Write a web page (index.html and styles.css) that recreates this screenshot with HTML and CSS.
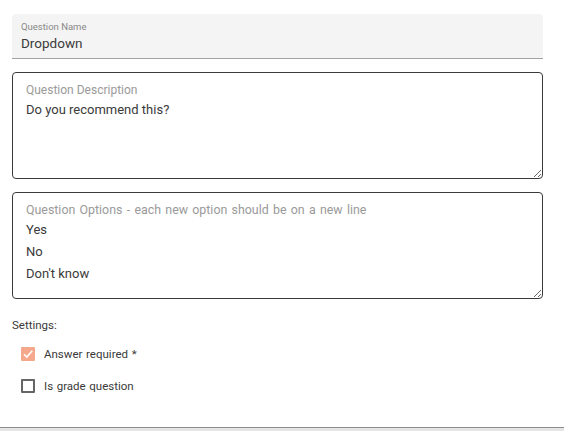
FILE: index.html
```html
<!DOCTYPE html>
<html>
<head>
<meta charset="utf-8">
<link rel="stylesheet" href="styles.css">
</head>
<body>
<div class="page">
  <div class="form">
    <div class="name-field">
      <div class="small-label">Question Name</div>
      <div class="name-value">Dropdown</div>
    </div>
    <div class="area-field desc">
      <div class="area-label">Question Description</div>
      <div class="area-line">Do you recommend this?</div>
    </div>
    <div class="area-field opts">
      <div class="area-label">Question Options - each new option should be on a new line</div>
      <div class="area-line">Yes</div>
      <div class="area-line">No</div>
      <div class="area-line">Don't know</div>
    </div>
    <div class="settings">
      <div class="settings-title">Settings:</div>
      <label class="check-row">
        <span class="box checked">
          <svg width="14" height="14" viewBox="0 0 14 14"><path d="M3 7.2 L5.8 10 L11.2 3.8" fill="none" stroke="#fff" stroke-width="1.6"/></svg>
        </span>
        <span class="check-text">Answer required *</span>
      </label>
      <label class="check-row">
        <span class="box"></span>
        <span class="check-text">Is grade question</span>
      </label>
    </div>
  </div>
  <div class="footer"></div>
</div>
</body>
</html>
```

FILE: styles.css
```css
* { box-sizing: border-box; }
html, body { margin: 0; padding: 0; background: #fff; }
body {
  font-family: Roboto, "Liberation Sans", Arial, sans-serif;
  color: #3a3a3a;
}
.page {
  min-height: 431px;
  display: flex;
  flex-direction: column;
}
.form {
  padding: 14px 21px 0 12px;
  display: flex;
  flex-direction: column;
}
.name-field {
  height: 45px;
  background: #f4f4f4;
  border-radius: 4px 4px 0 0;
  border-bottom: 1px solid #a3a3a3;
  padding: 7px 9px 0 9px;
}
.small-label {
  font-size: 9.5px;
  line-height: 11px;
  color: #888;
}
.name-value {
  font-size: 13.5px;
  line-height: 18px;
  margin-top: 2px;
  color: #3a3a3a;
}
.area-field {
  margin-top: 13px;
  height: 107px;
  border: 1px solid #3a3a3a;
  border-radius: 4px;
  padding: 9px 13px 0 13px;
  resize: vertical;
  overflow: auto;
}
.area-label {
  font-size: 12px;
  line-height: 16px;
  color: #9a9a9a;
}
.area-line {
  font-size: 13px;
  line-height: 22px;
  color: #3a3a3a;
}
.desc .area-label { margin-bottom: 1px; }
.opts { margin-top: 13px; }
.opts .area-label { margin-bottom: 1px; font-size: 12.4px; word-spacing: 1.2px; }
.settings {
  padding-top: 19px;
}
.settings-title {
  font-size: 11.5px;
  line-height: 14px;
  color: #3a3a3a;
}
.check-row {
  display: flex;
  align-items: center;
  gap: 9px;
  padding-left: 9px;
  height: 32px;
}
.check-row:first-of-type { margin-top: 6px; }
.box {
  width: 14px;
  height: 14px;
  border: 2px solid #666;
  border-radius: 1px;
  display: flex;
  align-items: center;
  justify-content: center;
}
.box.checked {
  background: #f6a88d;
  border: none;
}
.check-text {
  font-size: 11.5px;
  word-spacing: 0.8px;
  color: #3a3a3a;
}
.footer {
  margin-top: auto;
  height: 4px;
  background: #e5e5e5;
  border-top: 1px solid #8c8c8c;
}
```
